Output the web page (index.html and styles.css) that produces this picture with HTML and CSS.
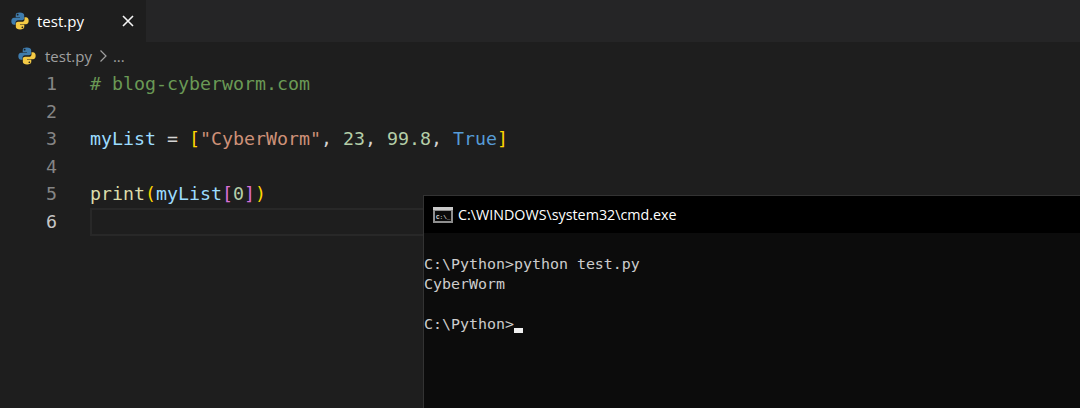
FILE: index.html
```html
<!DOCTYPE html>
<html lang="en">
<head>
<meta charset="utf-8">
<title>test.py</title>
<link rel="stylesheet" href="styles.css">
</head>
<body>
<svg width="0" height="0" class="defs">
  <defs>
    <symbol id="py" viewBox="0 0 16 16">
      <path fill="#3f7cad" d="M7.9 0.5C5.6 0.5 4.2 1.2 4.2 2.7V4.6H8V5.2H2.7C1.2 5.2 0.3 6.4 0.3 8.2C0.3 10 1.2 11.3 2.7 11.3H4V9.4C4 8.2 5 7.3 6.2 7.3H9.8C10.8 7.3 11.7 6.5 11.7 5.5V2.7C11.7 1.3 10.1 0.5 7.9 0.5ZM5.9 1.6C6.4 1.6 6.7 2 6.7 2.4C6.7 2.9 6.4 3.2 5.9 3.2C5.5 3.2 5.1 2.9 5.1 2.4C5.1 2 5.5 1.6 5.9 1.6Z"/>
      <path fill="#f4ca45" d="M8.1 15.5C10.4 15.5 11.8 14.8 11.8 13.3V11.4H8V10.8H13.3C14.8 10.8 15.7 9.6 15.7 7.8C15.7 6 14.8 4.7 13.3 4.7H12V6.6C12 7.8 11 8.7 9.8 8.7H6.2C5.2 8.7 4.3 9.5 4.3 10.5V13.3C4.3 14.7 5.9 15.5 8.1 15.5ZM10.1 14.4C9.6 14.4 9.3 14 9.3 13.6C9.3 13.1 9.6 12.8 10.1 12.8C10.5 12.8 10.9 13.1 10.9 13.6C10.9 14 10.5 14.4 10.1 14.4Z"/>
    </symbol>
  </defs>
</svg>
<div class="editor">
  <div class="tabbar">
    <div class="tab">
      <svg class="py-icon" width="18" height="18"><use href="#py"/></svg>
      <span class="tab-name">test.py</span>
      <svg class="close" width="12" height="12" viewBox="0 0 12 12"><path d="M1 1L11 11M11 1L1 11" stroke="#f4f4f4" stroke-width="1.6" fill="none"/></svg>
    </div>
  </div>
  <div class="crumbs">
    <svg class="py-icon" width="18" height="18"><use href="#py"/></svg>
    <span>test.py</span>
    <svg class="chev" width="9" height="14" viewBox="0 0 9 14"><path d="M1.5 1.5L7 7L1.5 12.5" stroke="#a0a0a0" stroke-width="1.2" fill="none"/></svg>
    <span>...</span>
  </div>
  <div class="code">
    <div class="line"><span class="num">1</span><span class="src"><span class="c-comment"># blog-cyberworm.com</span></span></div>
    <div class="line"><span class="num">2</span><span class="src"></span></div>
    <div class="line"><span class="num">3</span><span class="src"><span class="c-var">myList</span> = <span class="c-gold">[</span><span class="c-str">"CyberWorm"</span>, <span class="c-numb">23</span>, <span class="c-numb">99.8</span>, <span class="c-kw">True</span><span class="c-gold">]</span></span></div>
    <div class="line"><span class="num">4</span><span class="src"></span></div>
    <div class="line"><span class="num">5</span><span class="src"><span class="c-fn">print</span><span class="c-gold">(</span><span class="c-var">myList</span><span class="c-pink">[</span><span class="c-numb">0</span><span class="c-pink">]</span><span class="c-gold">)</span></span></div>
    <div class="line current"><span class="num">6</span><span class="src"></span></div>
  </div>
</div>
<div class="cmd">
  <div class="cmd-title">
    <svg class="cmd-icon" width="20" height="16" viewBox="0 0 20 16">
      <rect x="0" y="0" width="20" height="16" fill="#8e8e8e"/>
      <rect x="0" y="0" width="20" height="3" fill="#c9c9c9"/>
      <rect x="2" y="4" width="16" height="10" fill="#0a0a0a"/>
      <text x="3" y="11.5" class="cmd-icon-text">C:\_</text>
    </svg>
    <span>C:\WINDOWS\system32\cmd.exe</span>
  </div>
  <div class="cmd-body">
    <div class="cmd-line">&nbsp;</div>
    <div class="cmd-line">C:\Python&gt;python test.py</div>
    <div class="cmd-line">CyberWorm</div>
    <div class="cmd-line">&nbsp;</div>
    <div class="cmd-line">C:\Python&gt;<span class="cursor"></span></div>
  </div>
</div>
</body>
</html>
```
FILE: styles.css
```css
* { box-sizing: border-box; }
html, body { margin: 0; height: 408px; overflow: hidden; background: #1e1e1e; }
.defs { position: absolute; }
.editor { display: flex; flex-direction: column; height: 408px; font-family: "Open Sans", sans-serif; }
.tabbar { display: flex; height: 42px; background: #252526; flex: none; }
.tab { display: flex; align-items: center; width: 146px; background: #1e1e1e; padding-left: 11px; color: #fff; font-size: 15px; }
.tab-name { margin-left: 8px; }
.close { margin-left: 38px; }
.py-icon { flex: none; }
.crumbs { display: flex; align-items: center; height: 28px; padding-left: 18px; color: #a0a0a0; font-size: 15px; flex: none; }
.crumbs span:first-of-type { margin-left: 9px; }
.chev { margin: 0 5px 0 7px; }
.code { font-family: "DejaVu Sans Mono", monospace; font-size: 18.27px; color: #d4d4d4; }
.line { display: flex; height: 27.5px; line-height: 27.5px; }
.num { width: 57px; text-align: right; color: #858585; flex: none; }
.src { margin-left: 33px; flex: 1; white-space: pre; }
.current { margin-top: 0.5px; }
.current .num { color: #c6c6c6; }
.current .src { border: 2px solid #282828; }
.c-comment { color: #6a9955; }
.c-var { color: #9cdcfe; }
.c-gold { color: #ffd700; }
.c-pink { color: #da70d6; }
.c-str { color: #ce9178; }
.c-numb { color: #b5cea8; }
.c-kw { color: #569cd6; }
.c-fn { color: #dcdcaa; }
.cmd { position: absolute; left: 423px; top: 195px; width: 657px; height: 213px; background: #0c0c0c; border-left: 1px solid #333; border-top: 1px solid #333; }
.cmd-title { display: flex; align-items: center; height: 37px; background: #000; color: #fff; font-family: "Open Sans", sans-serif; font-size: 14.3px; padding-left: 9px; }
.cmd-icon { margin-right: 5px; }
.cmd-icon-text { font-family: "Liberation Mono", monospace; font-size: 6px; font-weight: 700; fill: #ddd; }
.cmd-body { font-family: "DejaVu Sans Mono", monospace; font-size: 14.95px; line-height: 20px; color: #cccccc; margin-top: 1px; }
.cmd-line { height: 20px; white-space: pre; }
.cursor { display: inline-block; width: 9px; height: 5px; background: #f0f0f0; vertical-align: -4px; }
```
